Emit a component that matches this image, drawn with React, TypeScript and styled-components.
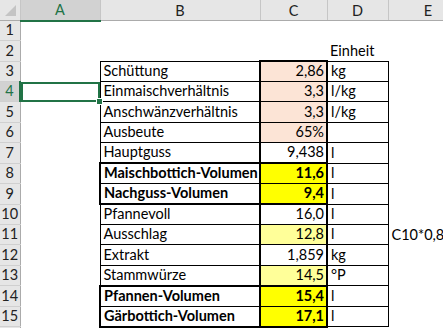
import React from "react";
import styled, { createGlobalStyle, css } from "styled-components";

const GlobalStyle = createGlobalStyle`
  html, body {
    margin: 0;
    padding: 0;
    background: #fff;
    overflow: hidden;
  }
  body {
    font-family: Lato, "Liberation Sans", sans-serif;
  }
`;

const green = "#217346";
const thin = "1px solid #000";
const thick = "2px solid #000";
const fills = { peach: "#fce4d6", yellow: "#ffff00", pale: "#ffff99" };

type Fill = keyof typeof fills;

interface Row {
  n: number;
  label?: string;
  value?: string;
  unit?: string;
  note?: string;
  fill?: Fill;
  bold?: boolean;
  group?: "top" | "bottom";
}

const rows: Row[] = [
  { n: 1 },
  { n: 2 },
  { n: 3, label: "Schüttung", value: "2,86", unit: "kg", fill: "peach" },
  { n: 4, label: "Einmaischverhältnis", value: "3,3", unit: "l/kg", fill: "peach" },
  { n: 5, label: "Anschwänzverhältnis", value: "3,3", unit: "l/kg", fill: "peach" },
  { n: 6, label: "Ausbeute", value: "65%", unit: "", fill: "peach" },
  { n: 7, label: "Hauptguss", value: "9,438", unit: "l" },
  { n: 8, label: "Maischbottich-Volumen", value: "11,6", unit: "l", fill: "yellow", bold: true, group: "top" },
  { n: 9, label: "Nachguss-Volumen", value: "9,4", unit: "l", fill: "yellow", bold: true, group: "bottom" },
  { n: 10, label: "Pfannevoll", value: "16,0", unit: "l" },
  { n: 11, label: "Ausschlag", value: "12,8", unit: "l", fill: "pale", note: "C10*0,8" },
  { n: 12, label: "Extrakt", value: "1,859", unit: "kg" },
  { n: 13, label: "Stammwürze", value: "14,5", unit: "°P", fill: "pale" },
  { n: 14, label: "Pfannen-Volumen", value: "15,4", unit: "l", fill: "yellow", bold: true, group: "top" },
  { n: 15, label: "Gärbottich-Volumen", value: "17,1", unit: "l", fill: "yellow", bold: true, group: "bottom" },
  { n: 16 },
];

const columns = ["A", "B", "C", "D", "E"];
const widths = [20, 80, 160, 67, 61, 80];

export default function App() {
  return (
    <>
      <GlobalStyle />
      <Viewport>
        <Sheet>
          <colgroup>
            {widths.map((w, i) => (
              <col key={i} style={{ width: w }} />
            ))}
          </colgroup>
          <thead>
            <HeadRow>
              <Corner>
                <svg width="20" height="20" viewBox="0 0 20 20">
                  <polygon points="16,5 16,16 5,16" fill="#c4c4c4" />
                </svg>
              </Corner>
              {columns.map(c => (
                <ColHead key={c} $active={c === "A"}>
                  {c}
                </ColHead>
              ))}
            </HeadRow>
          </thead>
          <tbody>
            {rows.map(r => {
              const inTable = r.n >= 3 && r.n <= 15;
              return (
                <SheetRow key={r.n}>
                  <RowHead $active={r.n === 4}>{r.n}</RowHead>
                  <Cell $selected={r.n === 4}>{r.n === 4 && <FillHandle />}</Cell>
                  {inTable ? (
                    <>
                      <Cell $box $bold={r.bold} $group={r.group} $groupLeft={!!r.group}>
                        {r.label}
                      </Cell>
                      <Cell
                        $box
                        $right
                        $bold={r.bold}
                        $fill={r.fill}
                        $group={r.group}
                        $colTop={r.n === 3}
                        $colBottom={r.n === 15}
                        $thickSides
                      >
                        {r.value}
                      </Cell>
                      <Cell $box>{r.unit}</Cell>
                    </>
                  ) : (
                    <>
                      <Cell />
                      <Cell />
                      <Cell>{r.n === 2 ? "Einheit" : null}</Cell>
                    </>
                  )}
                  <Cell>{r.note}</Cell>
                </SheetRow>
              );
            })}
          </tbody>
        </Sheet>
      </Viewport>
    </>
  );
}

const Viewport = styled.div`
  width: 100vw;
  height: 100vh;
  overflow: hidden;
`;

const Sheet = styled.table`
  border-collapse: collapse;
  table-layout: fixed;
  width: 468px;
  font-size: 14.5px;
  color: #000;
`;

const HeadRow = styled.tr`
  height: 20px;
`;

const Corner = styled.th`
  padding: 0;
  background: #e6e6e6;
  border-right: 1px solid #c6c6c6;
  border-bottom: 1px solid #ababab;
  line-height: 0;
  vertical-align: top;
`;

const ColHead = styled.th<{ $active?: boolean }>`
  padding: 0;
  font-weight: 400;
  font-size: 14.5px;
  color: #222;
  background: #e6e6e6;
  border-right: 1px solid #c6c6c6;
  border-bottom: 1px solid #ababab;
  text-align: center;
  vertical-align: middle;
  ${p =>
    p.$active &&
    css`
      background: #d2d2d2;
      color: ${green};
      border-bottom: 2px solid ${green};
    `}
`;

const SheetRow = styled.tr`
  height: 20.33px;
`;

const RowHead = styled.th<{ $active?: boolean }>`
  padding: 0 0 2px;
  font-weight: 400;
  font-size: 14.5px;
  color: #222;
  background: #e6e6e6;
  border-right: 1px solid #ababab;
  border-bottom: 1px solid #d0d0d0;
  text-align: center;
  vertical-align: bottom;
  ${p =>
    p.$active &&
    css`
      background: #d2d2d2;
      color: ${green};
      border-right: 2px solid ${green};
    `}
`;

interface CellProps {
  $box?: boolean;
  $right?: boolean;
  $bold?: boolean;
  $fill?: Fill;
  $group?: "top" | "bottom";
  $groupLeft?: boolean;
  $colTop?: boolean;
  $colBottom?: boolean;
  $thickSides?: boolean;
  $selected?: boolean;
}

const Cell = styled.td<CellProps>`
  position: relative;
  padding: 0 2px 2px 3px;
  white-space: nowrap;
  vertical-align: bottom;
  line-height: 17px;
  text-align: ${p => (p.$right ? "right" : "left")};
  font-weight: ${p => (p.$bold ? 700 : 400)};
  background: ${p => (p.$fill ? fills[p.$fill] : "transparent")};
  ${p => p.$box && css`border: ${thin};`}
  ${p => p.$thickSides && css`border-left: ${thick}; border-right: ${thick};`}
  ${p => p.$groupLeft && css`border-left: ${thick};`}
  ${p => (p.$group === "top" || p.$colTop) && css`border-top: ${thick};`}
  ${p => (p.$group === "bottom" || p.$colBottom) && css`border-bottom: ${thick};`}
  ${p => p.$selected && css`box-shadow: inset 0 0 0 2px ${green};`}
`;

const FillHandle = styled.span`
  position: absolute;
  right: -3px;
  bottom: -3px;
  width: 5px;
  height: 5px;
  background: ${green};
  border: 1px solid #fff;
  z-index: 2;
`;
